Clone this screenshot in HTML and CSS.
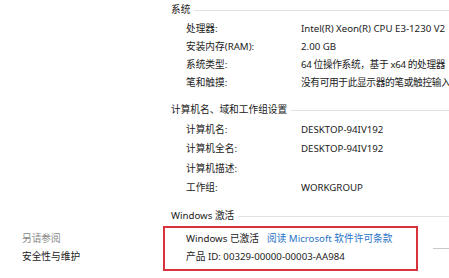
FILE: index.html
```html
<!DOCTYPE html>
<html lang="zh-CN">
<head>
  <meta charset="UTF-8">
  <title>系统</title>
  <link rel="stylesheet" href="styles.css">
</head>
<body>
  <div class="pagina">
    <div class="lateral">
      <div class="lateral-titulo">另请参阅</div>
      <div class="lateral-link">安全性与维护</div>
    </div>

    <div class="conteudo">
      <div class="secao">
        <div class="titulo">系统</div>
        <div class="linha"><span>处理器:</span><span>Intel(R) Xeon(R) CPU E3-1230 V2</span></div>
        <div class="linha"><span>安装内存(RAM):</span><span>2.00 GB</span></div>
        <div class="linha"><span>系统类型:</span><span class="compacto">64 位操作系统，基于 x64 的处理器</span></div>
        <div class="linha"><span>笔和触摸:</span><span class="compacto">没有可用于此显示器的笔或触控输入</span></div>
      </div>

      <div class="secao secao-pc">
        <div class="titulo">计算机名、域和工作组设置</div>
        <div class="linha"><span>计算机名:</span><span>DESKTOP-94IV192</span></div>
        <div class="linha"><span>计算机全名:</span><span>DESKTOP-94IV192</span></div>
        <div class="linha"><span>计算机描述:</span><span></span></div>
        <div class="linha"><span>工作组:</span><span>WORKGROUP</span></div>
      </div>

      <div class="secao secao-ativ">
        <div class="titulo">Windows 激活</div>
        <div class="ativacao">
          <div class="destaque">
            <div class="linha-ativ">Windows 已激活<a class="link" href="#">阅读 Microsoft 软件许可条款</a></div>
            <div class="linha-ativ">产品 ID: 00329-00000-00003-AA984</div>
          </div>
          <div class="traco"></div>
        </div>
      </div>
    </div>
  </div>
</body>
</html>
```

FILE: styles.css
```css
body {
  margin: 0;
  background: #ffffff;
  font-family: "Noto Sans", "Noto Sans CJK SC", sans-serif;
  font-size: 9.7px;
  color: #222;
  overflow: hidden;
}
.pagina {
  display: flex;
  height: 278px;
}
.lateral {
  flex-shrink: 0;
  width: 149px;
  padding-left: 22px;
  display: flex;
  flex-direction: column;
  justify-content: flex-end;
  padding-bottom: 12px;
}
.lateral-titulo {
  color: #8a8a8a;
  height: 18px;
  line-height: 18px;
}
.lateral-link {
  color: #1a1a1a;
  height: 18px;
  line-height: 18px;
}
.conteudo {
  flex: 1;
  min-width: 0;
}
.secao {
  margin-bottom: 8px;
}
.titulo {
  display: flex;
  align-items: center;
  gap: 4px;
  height: 18px;
  margin-bottom: 2px;
  color: #1a1a1a;
}
.titulo::after {
  content: "";
  flex: 1;
  border-top: 1px solid #e2e2e2;
  margin-top: 3px;
}
.linha {
  display: grid;
  grid-template-columns: 115px 1fr;
  padding-left: 15px;
  height: 18px;
  line-height: 18px;
  white-space: nowrap;
}
.compacto {
  letter-spacing: -0.35px;
}
.secao-pc .linha {
  height: 19.3px;
  line-height: 19.3px;
}
.secao-pc {
  margin-bottom: 9px;
}
.ativacao {
  display: flex;
  align-items: center;
}
.destaque {
  flex-shrink: 0;
  margin-left: -8px;
  width: 255px;
  border: 2px solid #d8323c;
  padding: 2px 0 3px 21px;
  box-sizing: border-box;
}
.linha-ativ {
  height: 18px;
  line-height: 18px;
  white-space: nowrap;
}
.link {
  color: #2a74c9;
  text-decoration: none;
  margin-left: 8px;
}
.traco {
  flex-shrink: 0;
  width: 20px;
  margin-left: 15px;
  border-top: 1px solid #c8c8c8;
}
```
